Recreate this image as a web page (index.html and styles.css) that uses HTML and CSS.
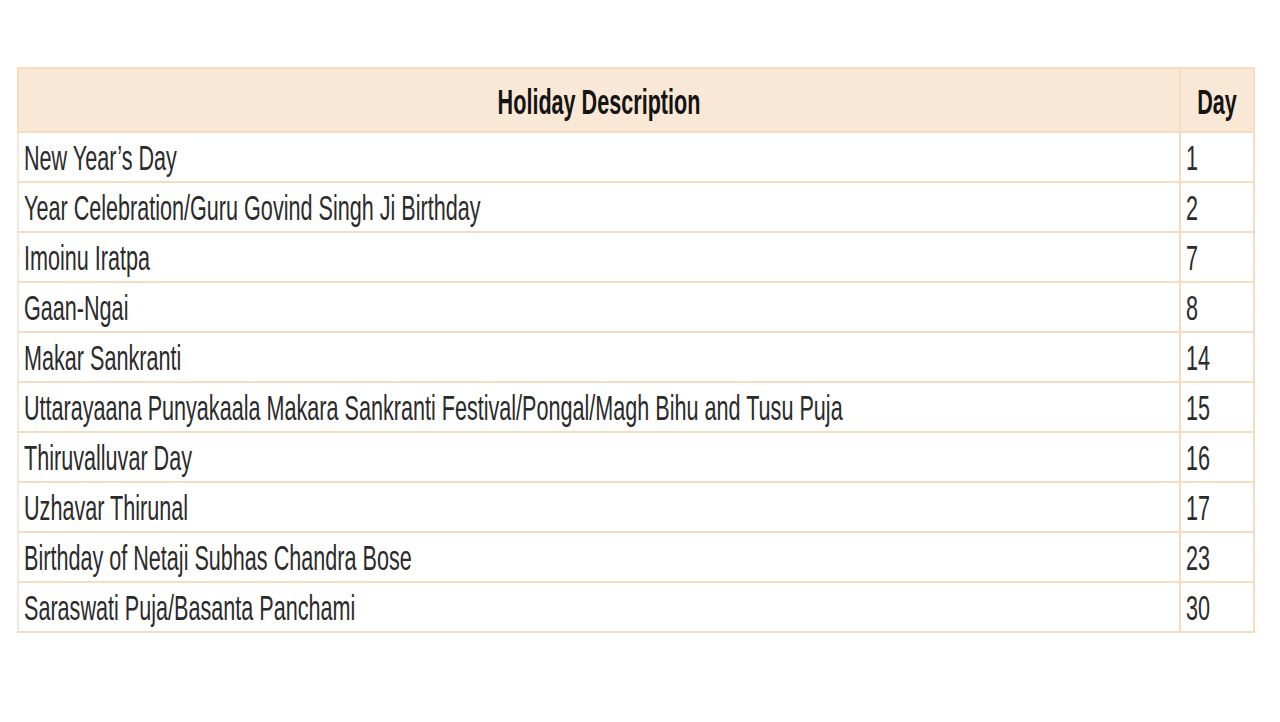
FILE: index.html
```html
<!DOCTYPE html>
<html lang="en">
<head>
<meta charset="utf-8">
<title>Holidays</title>
<link rel="stylesheet" href="styles.css">
</head>
<body>
<div class="page">
  <table class="holidays">
    <thead>
      <tr>
        <th class="desc"><span class="t">Holiday Description</span></th>
        <th class="day"><span class="t">Day</span></th>
      </tr>
    </thead>
    <tbody>
      <tr><td><span class="t">New Year’s Day</span></td><td><span class="t">1</span></td></tr>
      <tr><td><span class="t">Year Celebration/Guru Govind Singh Ji Birthday</span></td><td><span class="t">2</span></td></tr>
      <tr><td><span class="t">Imoinu Iratpa</span></td><td><span class="t">7</span></td></tr>
      <tr><td><span class="t">Gaan-Ngai</span></td><td><span class="t">8</span></td></tr>
      <tr><td><span class="t">Makar Sankranti</span></td><td><span class="t">14</span></td></tr>
      <tr><td><span class="t">Uttarayaana Punyakaala Makara Sankranti Festival/Pongal/Magh Bihu and Tusu Puja</span></td><td><span class="t">15</span></td></tr>
      <tr><td><span class="t">Thiruvalluvar Day</span></td><td><span class="t">16</span></td></tr>
      <tr><td><span class="t">Uzhavar Thirunal</span></td><td><span class="t">17</span></td></tr>
      <tr><td><span class="t">Birthday of Netaji Subhas Chandra Bose</span></td><td><span class="t">23</span></td></tr>
      <tr><td><span class="t">Saraswati Puja/Basanta Panchami</span></td><td><span class="t">30</span></td></tr>
    </tbody>
  </table>
</div>
</body>
</html>
```
FILE: styles.css
```css
html, body {
  margin: 0;
  padding: 0;
  background: #ffffff;
}
.page {
  padding: 67px 0 0 17px;
  font-family: "Liberation Sans", Arial, sans-serif;
}
.holidays {
  border-collapse: collapse;
  width: 1238px;
  table-layout: fixed;
}
.holidays th, .holidays td {
  border: 2px solid #f6dcc1;
  padding: 0 0 0 5px;
  font-size: 21.6px;
  color: #2b2b2b;
  white-space: nowrap;
  overflow: visible;
}
.holidays th {
  background: #fae8d6;
  height: 62px;
  text-align: center;
  padding: 0;
  color: #141414;
  font-weight: bold;
  font-size: 21.6px;
}
.holidays th.day {
  width: 72px;
}
.holidays td {
  height: 48px;
}
.holidays td:first-child {
  border-left-color: #f3e7dc;
}
.t {
  display: inline-block;
  transform: translateY(2px) scaleY(1.62);
  transform-origin: center;
}
.holidays th .t {
  transform: translateY(3px) scaleY(1.62);
}
```
